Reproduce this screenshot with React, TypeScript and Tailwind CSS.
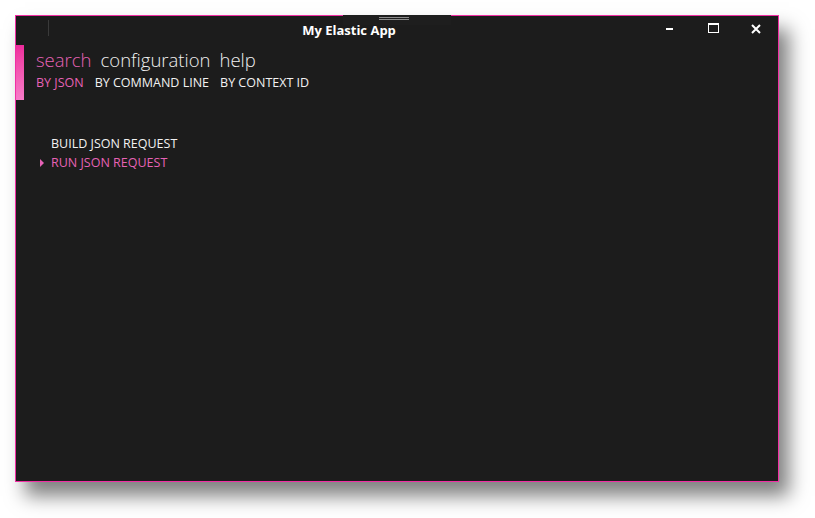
const pink = "text-[#e662b6]"

const TitleBar = () => (
  <div className="flex h-[29px] items-stretch">
    <div className="flex w-[33px] items-start justify-end pt-[4px]">
      <div className="h-[16px] w-px bg-[#3a3a3a]" />
    </div>
    <div className="flex flex-1 items-center justify-center pt-[1px]">
      <span className="text-[13px] font-bold text-white">My Elastic App</span>
    </div>
    <div className="flex">
      <button className="flex w-[43px] items-start justify-center pt-[12px]">
        <span className="mr-[2px] block h-[2px] w-[7px] bg-white" />
      </button>
      <button className="flex w-[43px] items-start justify-center pt-[7px]">
        <span className="block h-[10px] w-[11px] border border-t-2 border-white" />
      </button>
      <button className="flex w-[43px] items-start justify-center pt-[8px]">
        <svg width="10" height="10" viewBox="0 0 10 10" className="mr-[1px]">
          <path d="M1 1L9 9M9 1L1 9" stroke="white" strokeWidth="2" />
        </svg>
      </button>
    </div>
  </div>
)

export default function App() {
  return (
    <div className="h-[518px] w-[815px] bg-white pl-[15px] pt-[15px] font-['Open_Sans',sans-serif]">
      <div className="relative h-[467px] w-[764px] border border-[#f12ea4] bg-[#1c1c1c] shadow-[10px_14px_18px_rgba(0,0,0,0.5)]">
        {/* drag tab over the top border */}
        <div className="absolute left-[327px] top-[-1px] flex h-[10px] w-[108px] flex-col items-center gap-[1px] bg-[#1e1e1e] pt-[2px]">
          <span className="ml-[-6px] block h-px w-[30px] bg-[#8a8a8a]" />
          <span className="ml-[-6px] block h-px w-[30px] bg-[#8a8a8a]" />
        </div>

        <TitleBar />

        <div className="flex">
          <div className="h-[55px] w-[8px] bg-gradient-to-b from-[#ee2a9c] to-[#f77ac8]" />
          <div className="pl-[12px]">
            <div className="mt-[3px] flex gap-[9px] text-[18.5px] font-light leading-[24px] text-[#f0f0f0]">
              <span className={pink}>search</span>
              <span>configuration</span>
              <span>help</span>
            </div>
            <div className="mt-[2px] flex gap-[11px] text-[12.5px] leading-[18px] text-[#f2f2f2]">
              <span className={pink}>BY JSON</span>
              <span>BY COMMAND LINE</span>
              <span>BY CONTEXT ID</span>
            </div>
          </div>
        </div>

        <div className="mt-[35px] flex flex-col gap-[1px] pl-[24px] text-[12.5px] leading-[18px]">
          <div className="flex items-center">
            <span className="w-[11px]" />
            <span className="text-[#f2f2f2]">BUILD JSON REQUEST</span>
          </div>
          <div className="flex items-center">
            <svg width="11" height="8" viewBox="0 0 11 8">
              <path d="M0 0L4 4L0 8Z" fill="#e662b6" />
            </svg>
            <span className={pink}>RUN JSON REQUEST</span>
          </div>
        </div>
      </div>
    </div>
  )
}
